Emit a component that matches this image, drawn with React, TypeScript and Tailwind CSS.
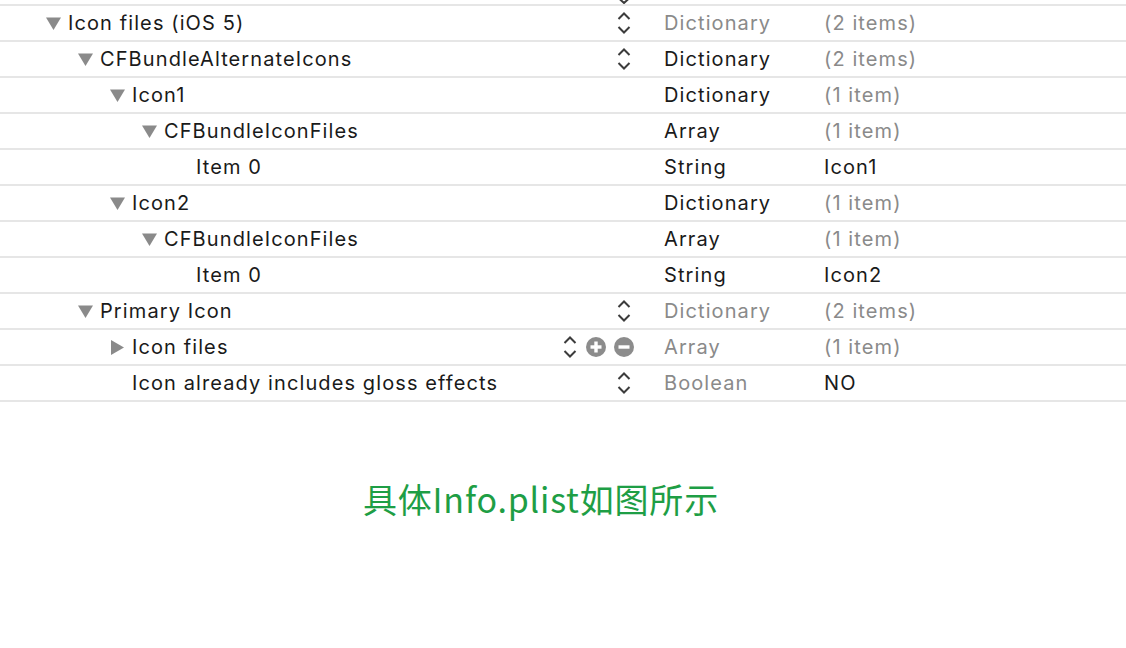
import React from 'react';

type Row = {
  name: string;
  level: number;
  toggle?: 'down' | 'right';
  type: string;
  typeDim?: boolean;
  value: string;
  valueDim?: boolean;
  controls?: 'stepper' | 'edit';
};

const ROWS: Row[] = [
  { name: 'Icon files (iOS 5)', level: 0, toggle: 'down', type: 'Dictionary', typeDim: true, value: '(2 items)', valueDim: true, controls: 'stepper' },
  { name: 'CFBundleAlternateIcons', level: 1, toggle: 'down', type: 'Dictionary', value: '(2 items)', valueDim: true, controls: 'stepper' },
  { name: 'Icon1', level: 2, toggle: 'down', type: 'Dictionary', value: '(1 item)', valueDim: true },
  { name: 'CFBundleIconFiles', level: 3, toggle: 'down', type: 'Array', value: '(1 item)', valueDim: true },
  { name: 'Item 0', level: 4, type: 'String', value: 'Icon1' },
  { name: 'Icon2', level: 2, toggle: 'down', type: 'Dictionary', value: '(1 item)', valueDim: true },
  { name: 'CFBundleIconFiles', level: 3, toggle: 'down', type: 'Array', value: '(1 item)', valueDim: true },
  { name: 'Item 0', level: 4, type: 'String', value: 'Icon2' },
  { name: 'Primary Icon', level: 1, toggle: 'down', type: 'Dictionary', typeDim: true, value: '(2 items)', valueDim: true, controls: 'stepper' },
  { name: 'Icon files', level: 2, toggle: 'right', type: 'Array', typeDim: true, value: '(1 item)', valueDim: true, controls: 'edit' },
  { name: 'Icon already includes gloss effects', level: 2, type: 'Boolean', typeDim: true, value: 'NO', controls: 'stepper' },
];

const INDENT = ['pl-[46px]', 'pl-[78px]', 'pl-[110px]', 'pl-[142px]', 'pl-[174px]'];

const Stepper = () => (
  <svg width="16" height="24" viewBox="0 0 16 24" className="shrink-0">
    <polyline points="2.5,8 8,2.5 13.5,8" fill="none" stroke="#3c3c3c" strokeWidth="2" />
    <polyline points="2.5,16 8,21.5 13.5,16" fill="none" stroke="#3c3c3c" strokeWidth="2" />
  </svg>
);

const CircleBtn = ({ plus }: { plus?: boolean }) => (
  <svg width="20" height="20" viewBox="0 0 20 20" className="shrink-0">
    <circle cx="10" cy="10" r="10" fill="#8c8c8c" />
    <rect x="4.5" y="8.3" width="11" height="3.4" fill="#fff" />
    {plus && <rect x="8.3" y="4.5" width="3.4" height="11" fill="#fff" />}
  </svg>
);

const Triangle = ({ dir }: { dir: 'down' | 'right' }) => (
  <svg width="15" height="15" viewBox="0 0 15 15" className="shrink-0">
    {dir === 'down' ? (
      <polygon points="0,1.5 15,1.5 7.5,14" fill="#8a8a8a" />
    ) : (
      <polygon points="1,0 14,7.5 1,15" fill="#8a8a8a" />
    )}
  </svg>
);

const PlistRow = ({ row }: { row: Row }) => (
  <div className="flex h-[36px] items-center border-b-2 border-[#e6e6e6]">
    <div className={`flex w-[664px] shrink-0 items-center ${INDENT[row.level]} pr-[32px]`}>
      <div className="w-[22px] shrink-0">{row.toggle && <Triangle dir={row.toggle} />}</div>
      <span className="flex-1 truncate text-[#1a1a1a]">{row.name}</span>
      {row.controls === 'stepper' && <Stepper />}
      {row.controls === 'edit' && (
        <div className="flex items-center gap-[8px] -mr-[2px]">
          <Stepper />
          <CircleBtn plus />
          <CircleBtn />
        </div>
      )}
    </div>
    <div className={`w-[160px] shrink-0 ${row.typeDim ? 'text-[#8a8a8a]' : 'text-[#1a1a1a]'}`}>{row.type}</div>
    <div className={row.valueDim ? 'text-[#8a8a8a]' : 'text-[#1a1a1a]'}>{row.value}</div>
  </div>
);

export default function App() {
  return (
    <div className="w-[1126px] h-[648px] overflow-hidden bg-white font-['Inter',sans-serif] text-[20px] tracking-[1.1px]">
      <div className="flex h-[6px] items-end overflow-hidden border-b-2 border-[#e6e6e6] pl-[616px]">
        <svg width="16" height="4" viewBox="0 0 16 4">
          <polyline points="2.5,-2 8,3 13.5,-2" fill="none" stroke="#3c3c3c" strokeWidth="2" />
        </svg>
      </div>
      {ROWS.map((row, i) => (
        <PlistRow key={i} row={row} />
      ))}
      <div className="mt-[75px] pl-[363px] font-['Noto_Sans_CJK_SC',sans-serif] text-[34px] leading-[44px] text-[#1e9e45] tracking-[0.8px]">
        具体Info.plist如图所示
      </div>
    </div>
  );
}
